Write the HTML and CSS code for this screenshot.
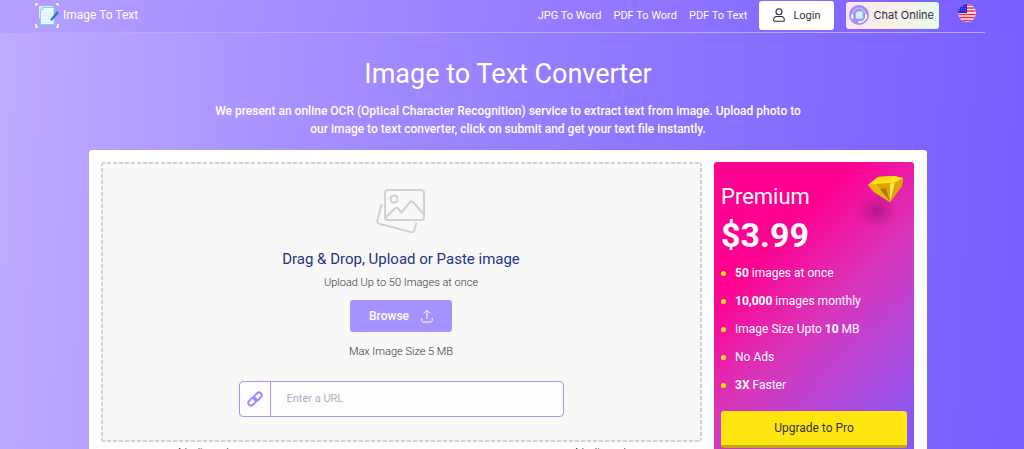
FILE: index.html
```html
<!DOCTYPE html>
<html lang="en">
<head>
  <meta charset="UTF-8">
  <meta name="viewport" content="width=device-width, initial-scale=1.0">
  <title>Image to Text Converter</title>
  <link rel="stylesheet" href="styles.css">
</head>
<body>
  <!-- Header -->
  <header class="header">
    <div class="header-inner">
      <a href="#" class="logo">
        <svg width="24" height="26" viewBox="0 0 24 26" fill="none">
          <path d="M1 4V2h2M21 2h2v2M1 22v3h2M21 25h2v-3" stroke="#fff" stroke-width="1.4"/>
          <path d="M4 4h14v12H4z" fill="#e8e4f5"/>
          <path d="M7.500 5.500h11.500v17H5.500v-14z" fill="#edf9fd" stroke="#6fdcee"/>
          <path d="M5.500 8.500h3v-3z" fill="#8fe5f1"/>
          <path d="M8 11h9M8 14h9M8 17h9M8 20h9" stroke="#d3ebf5"/>
          <path d="M16.500 17.500l6-7" stroke="#2b6fd6" stroke-width="2.200" stroke-linecap="round"/>
        </svg>
        <span>Image To Text</span>
      </a>
      <nav class="nav">
        <a href="#" class="nav-link">JPG To Word</a>
        <a href="#" class="nav-link">PDF To Word</a>
        <a href="#" class="nav-link">PDF To Text</a>
        <a href="#" class="login-btn">
          <svg width="12" height="14" viewBox="0 0 12 14" fill="none" stroke="#2b2b45" stroke-width="1.100">
            <circle cx="6" cy="3.700" r="3"/>
            <path d="M2.800 8.500h6.400c1.400.6 2.200 2 2.200 3.400 0 .8-.5 1.400-1.300 1.400H1.900c-.8 0-1.300-.6-1.300-1.400 0-1.400.8-2.800 2.200-3.400z"/>
          </svg>
          <span>Login</span>
        </a>
        <button type="button" class="chat-btn">
          <svg width="20" height="20" viewBox="0 0 20 20" fill="none">
            <circle cx="10" cy="10" r="10" fill="#a48bfa"/>
            <path d="M3.500 11V9.500a6.500 6.500 0 0 1 13 0V11" stroke="#d9ceff" stroke-width="1"/>
            <path d="M3.300 10v3M17 10v3" stroke="#fff" stroke-width="2" stroke-linecap="round"/>
            <path d="M8.500 6H14v8H6.500V8z" fill="#d6eff8" stroke="#86bfe8"/>
            <path d="M16.500 13c-.8 2.500-2.500 4-5 4" stroke="#fff" stroke-width="1.200"/>
            <ellipse cx="10.800" cy="17" rx="1.800" ry="1.100" fill="#fff"/>
          </svg>
          <span>Chat Online</span>
        </button>
        <button type="button" class="lang-btn" aria-label="English">
          <svg width="18" height="18" viewBox="0 0 18 18">
            <clipPath id="flag"><circle cx="9" cy="9" r="9"/></clipPath>
            <g clip-path="url(#flag)">
              <path d="M0 0h18v18H0z" fill="#f8eef4"/>
              <path d="M0 1h18M0 4h18M0 7h18M0 10.500h18M0 13.500h18M0 16.500h18" stroke="#f02c48" stroke-width="1.700"/>
              <path d="M0 0h9v9H0z" fill="#2326d0"/>
              <path d="M2 2.500h6M1 4.500h7M1 6.500h7" stroke="#7f84ec" stroke-width=".8" stroke-dasharray="1 1"/>
            </g>
          </svg>
        </button>
      </nav>
    </div>
  </header>

  <main class="container">
    <!-- Intro -->
    <section class="intro">
      <h1>Image to Text Converter</h1>
      <p>We present an online OCR (Optical Character Recognition) service to extract text from image. Upload photo to our image to text converter, click on submit and get your text file instantly.</p>
    </section>

    <!-- Converter -->
    <section class="card">
      <div class="card-main">
        <div class="drop-zone">
          <svg class="drop-icon" width="50" height="46" viewBox="0 0 50 46" fill="none" stroke="#d0d0d6" stroke-width="2" stroke-linecap="round" stroke-linejoin="round">
            <rect x="9" y="2" width="39" height="30" rx="3"/>
            <circle cx="18" cy="11" r="3.500"/>
            <path d="M9.500 29.500l9.500-9c1-.9 2-.9 3 0l3.500 4 8.500-10.500c.9-1 2-1 3 0L47.500 26"/>
            <path d="M5.500 17L1.300 32.500c-.4 1.600.3 2.800 1.900 3.200l32 8.400c1.500.4 2.700-.3 3.100-1.900l1.900-6.700"/>
          </svg>
          <h2>Drag &amp; Drop, Upload or Paste image</h2>
          <p class="drop-hint">Upload Up to 50 Images at once</p>
          <button type="button" class="browse-btn">
            <span>Browse</span>
            <svg width="12" height="14" viewBox="0 0 12 14" fill="none" stroke="#fff" stroke-linecap="round" stroke-linejoin="round">
              <path d="M6 9.500V1.500M3 4.200l3-3 3 3M.8 9.500v2c0 1 .5 1.500 1.500 1.500h7.400c1 0 1.500-.5 1.500-1.500v-2"/>
            </svg>
          </button>
          <p class="drop-size">Max Image Size 5 MB</p>
          <div class="url-box">
            <label for="url">
              <svg width="16" height="16" viewBox="0 0 16 16" fill="none" stroke="#a18aff" stroke-width="2">
                <rect x="-4.500" y="-2.700" width="9" height="5.400" rx="2.700" transform="translate(5.300 10.500) rotate(-45)"/>
                <rect x="-4.500" y="-2.700" width="9" height="5.400" rx="2.700" transform="translate(10.700 5.500) rotate(-45)"/>
              </svg>
            </label>
            <input type="text" id="url" placeholder="Enter a URL" aria-label="Enter a URL">
          </div>
        </div>
        <div class="ads">
          <span>Advertisement</span>
          <span>Advertisement</span>
        </div>
      </div>

      <!-- Premium -->
      <aside class="premium">
        <svg class="diamond" width="56" height="56" viewBox="0 0 56 56">
          <defs>
            <radialGradient id="shade">
              <stop offset="0" stop-color="#82126e" stop-opacity=".5"/>
              <stop offset="1" stop-color="#82126e" stop-opacity="0"/>
            </radialGradient>
          </defs>
          <ellipse cx="24" cy="37" rx="20" ry="17" fill="url(#shade)"/>
          <path d="M15 11l10-8 16-1 9 2-1 8-12 16-16-10z" fill="#f5c800"/>
          <path d="M15 11l10-8 16-1 9 2-10 5-22 1z" fill="#ffe41c"/>
          <path d="M25 3l-2 6 13-3 5-4z" fill="#f9dc10"/>
          <path d="M23 10l14-1 0 19z" fill="#e0a400"/>
          <path d="M26 15l7-1 4 14z" fill="#bd7508"/>
          <path d="M37 10l5-1-5 19z" fill="#ffe65a"/>
          <path d="M42 9l8-5-1 8-12 16z" fill="#dba400"/>
          <path d="M15 11l8-1 14 18-16-10z" fill="#eab90a"/>
        </svg>
        <h3>Premium</h3>
        <div class="price">$3.99</div>
        <ul class="features">
          <li><b>50</b> images at once</li>
          <li><b>10,000</b> images monthly</li>
          <li>Image Size Upto <b>10</b> MB</li>
          <li>No Ads</li>
          <li><b>3X</b> Faster</li>
        </ul>
        <button type="button" class="upgrade-btn">Upgrade to Pro</button>
      </aside>
    </section>
  </main>
</body>
</html>
```
FILE: styles.css
```css
* {
  box-sizing: border-box;
}
body {
  font-family: Roboto, sans-serif;
  font-size: 12px;
  background: linear-gradient(93deg, #c0adff 0%, #a791ff 28%, #8f78ff 60%, #785cff 100%) fixed;
  margin: 0;
  color: #fff;
}
h1, h2, h3, p, ul {
  margin: 0;
  padding: 0;
  font-weight: 400;
}
a {
  color: inherit;
  text-decoration: none;
}
button {
  font-family: inherit;
  font-size: 12px;
  border: none;
  cursor: pointer;
}

/* Header */
.header {
  background: linear-gradient(100deg, #b6a1ff 0%, #785cff 100%);
  padding: 0 39px 0 31px;
}
.header-inner {
  display: flex;
  align-items: center;
  justify-content: space-between;
  height: 33px;
  padding: 0 9px 2px 4px;
  border-bottom: 1px solid #b8a8ff;
}
.logo {
  display: flex;
  align-items: center;
  gap: 4px;
}
.nav {
  display: flex;
  align-items: center;
}
.nav-link {
  font-size: 11px;
  margin-right: 12px;
}
.login-btn {
  display: flex;
  align-items: center;
  justify-content: center;
  gap: 8px;
  width: 75px;
  height: 29px;
  margin-right: 12px;
  background: #fff;
  border-radius: 3px;
  color: #333;
  font-size: 11px;
}
.chat-btn {
  display: flex;
  align-items: center;
  gap: 4px;
  height: 27px;
  margin-right: 19px;
  padding: 0 5px 0 3px;
  background: linear-gradient(100deg, #fbe6f8, #faf0e6 50%, #e6fbf0);
  border-radius: 3px;
  color: #2b2b45;
  font-family: Inter, sans-serif;
  font-size: 11px;
}
.lang-btn {
  display: flex;
  padding: 0 0 4px;
  background: none;
}

/* Intro */
.container {
  max-width: 1140px;
  margin: 0 auto;
  padding: 0 97px 0 89px;
}
.intro {
  max-width: 600px;
  margin: 0 auto;
  padding: 25px 0 12px;
  text-align: center;
}
.intro h1 {
  font-size: 27px;
  line-height: 32px;
  margin-bottom: 12px;
}
.intro p {
  font-size: 12px;
  font-weight: 500;
  line-height: 18px;
}

/* Converter */
.card {
  display: flex;
  gap: 12px;
  padding: 12px 13px 12px 12px;
  background: #fff;
  border-radius: 3px;
}
.card-main {
  flex: 1;
}
.drop-zone {
  --dash: #d2d2d2 0 4px, transparent 4px 6px;
  display: flex;
  flex-direction: column;
  align-items: center;
  padding: 26px 27px 25px 26px;
  background:
    repeating-linear-gradient(90deg, var(--dash)) top / 100% 2px no-repeat,
    repeating-linear-gradient(90deg, var(--dash)) bottom / 100% 2px no-repeat,
    repeating-linear-gradient(var(--dash)) left / 2px 100% no-repeat,
    repeating-linear-gradient(var(--dash)) right / 2px 100% no-repeat,
    #f8f8f8;
  border-radius: 3px;
}
.drop-icon {
  margin-bottom: 15px;
}
.drop-zone h2 {
  font-size: 15px;
  line-height: 20px;
  margin-bottom: 6px;
  color: #263283;
}
.drop-hint, .drop-size {
  font-size: 11px;
  font-weight: 300;
  line-height: 16px;
  color: #333;
}
.browse-btn {
  display: flex;
  align-items: center;
  justify-content: center;
  gap: 12px;
  width: 102px;
  height: 32px;
  margin: 9px 0 12px;
  background: #a592fc;
  border-radius: 3px;
  color: #fff;
  font-weight: 500;
}
.url-box {
  display: flex;
  width: 325px;
  max-width: 100%;
  height: 36px;
  margin-top: 21px;
  background: #fdfdfd;
  border: 1px solid #a592fc;
  border-radius: 4px;
}
.url-box label {
  display: flex;
  align-items: center;
  justify-content: center;
  width: 31px;
  border-right: 1px solid #a592fc;
}
.url-box input {
  flex: 1;
  min-width: 0;
  padding: 0 16px 2px;
  border: none;
  background: none;
  font-family: inherit;
  font-size: 11px;
  outline: none;
}
.url-box input::placeholder {
  color: #a9b0c0;
}
.ads {
  display: flex;
  justify-content: space-between;
  padding: 5px 76px 90px;
  font-size: 8px;
  line-height: 8px;
  color: #222;
}

/* Premium */
.premium {
  position: relative;
  align-self: flex-start;
  width: 200px;
  padding: 20px 7px;
  background: linear-gradient(136deg, #ff0090 27%, #d836bb 52%, #8659f6 92%);
  border-radius: 3px;
}
.diamond {
  position: absolute;
  top: 12px;
  right: 5px;
}
.premium h3 {
  font-size: 22px;
  line-height: 30px;
}
.price {
  font-size: 34px;
  line-height: 47px;
  font-weight: 700;
}
.features {
  list-style: none;
}
.features li {
  display: flex;
  align-items: center;
  line-height: 28px;
  white-space: pre;
}
.features li::before {
  content: "";
  width: 5px;
  height: 5px;
  margin-right: 9px;
  background: #ffe610;
  border-radius: 50%;
}
.upgrade-btn {
  width: 100%;
  height: 37px;
  margin-top: 12px;
  background: #ffe610;
  border-bottom: 3px solid #c0a80c;
  border-radius: 3px;
  color: #333;
}
```
